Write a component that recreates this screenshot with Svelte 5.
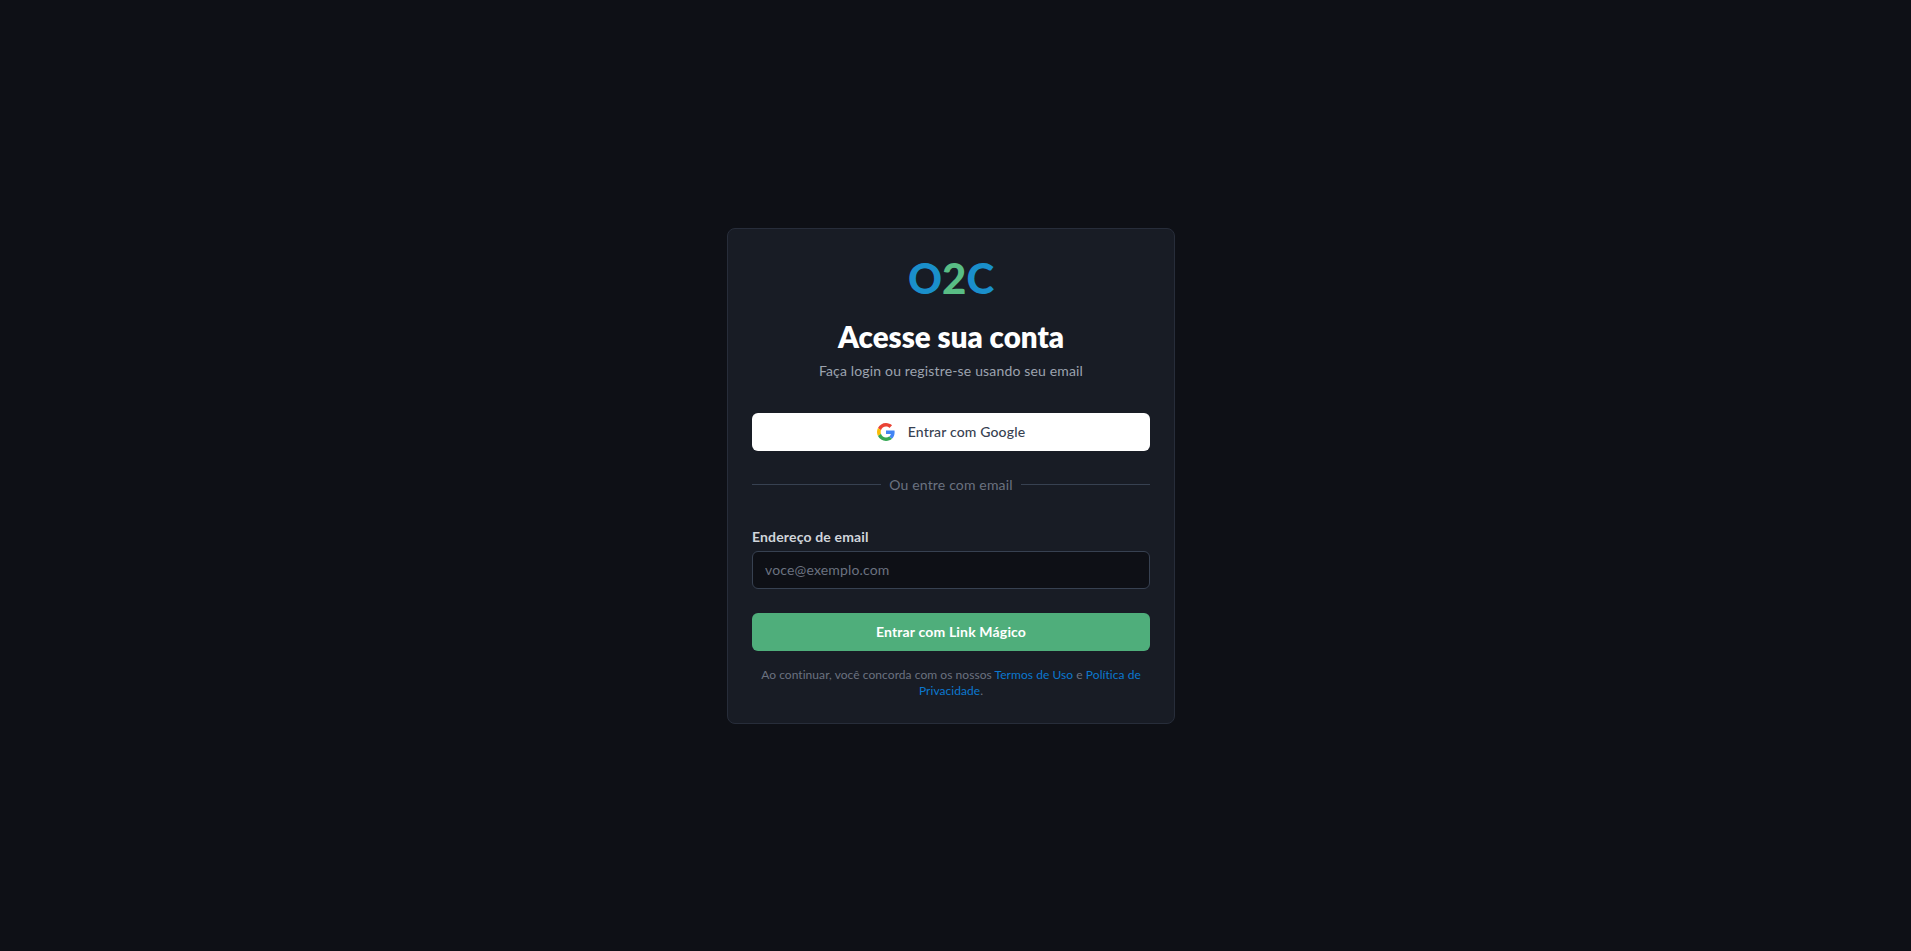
<script>
    let email = $state("");
</script>

<main class="page">
    <section class="card">
        <header class="head">
            <div class="logo" aria-label="O2C"><span class="blue">O</span><span class="green">2</span><span class="blue">C</span></div>
            <h1>Acesse sua conta</h1>
            <p>Faça login ou registre-se usando seu email</p>
        </header>

        <button class="google" type="button">
            <svg width="18" height="18" viewBox="0 0 48 48" aria-hidden="true">
                <path fill="#EA4335" d="M24 9.5c3.54 0 6.71 1.22 9.21 3.6l6.85-6.85C35.9 2.38 30.47 0 24 0 14.62 0 6.51 5.38 2.56 13.22l7.98 6.19C12.43 13.72 17.74 9.5 24 9.5z"/>
                <path fill="#4285F4" d="M46.98 24.55c0-1.57-.15-3.09-.38-4.55H24v9.02h12.94c-.58 2.96-2.26 5.48-4.78 7.18l7.73 6c4.51-4.18 7.09-10.36 7.09-17.65z"/>
                <path fill="#FBBC05" d="M10.53 28.59c-.48-1.45-.76-2.99-.76-4.59s.27-3.14.76-4.59l-7.98-6.19C.92 16.46 0 20.12 0 24c0 3.88.92 7.54 2.56 10.78l7.97-6.19z"/>
                <path fill="#34A853" d="M24 48c6.48 0 11.93-2.13 15.89-5.81l-7.73-6c-2.15 1.45-4.92 2.3-8.16 2.3-6.26 0-11.57-4.22-13.47-9.91l-7.98 6.19C6.51 42.62 14.62 48 24 48z"/>
            </svg>
            <span>Entrar com Google</span>
        </button>

        <div class="divider"><span>Ou entre com email</span></div>

        <form class="form" onsubmit={(e) => e.preventDefault()}>
            <label for="email">Endereço de email</label>
            <input id="email" type="email" placeholder="voce@exemplo.com" bind:value={email} />
            <button class="submit" type="submit">Entrar com Link Mágico</button>
        </form>

        <p class="terms">
            Ao continuar, você concorda com os nossos <a href="#termos">Termos de Uso</a> e <a href="#privacidade">Política de Privacidade</a>.
        </p>
    </section>
</main>

<style>
    :global(body) {
        margin: 0;
        background: #0e1016;
    }
    .page {
        box-sizing: border-box;
        min-height: 951px;
        width: 1902px;
        display: flex;
        align-items: center;
        justify-content: center;
        font-family: Lato, "Open Sans", sans-serif;
        letter-spacing: 0.01em;
    }
    .card {
        box-sizing: border-box;
        width: 448px;
        padding: 24px;
        background: #181c25;
        border: 1px solid #272d3a;
        border-radius: 8px;
    }
    .head {
        text-align: center;
        margin-bottom: 32px;
    }
    .logo {
        font-weight: 900;
        font-size: 42px;
        line-height: 50px;
        height: 50px;
        margin-bottom: 16px;
        letter-spacing: 0;
    }
    .blue { color: #1a8fcb; }
    .green { color: #59bd85; }
    h1 {
        margin: 0 0 6px;
        font-size: 29.5px;
        line-height: 36px;
        font-weight: 800;
        letter-spacing: 0;
        color: #fff;
    }
    .head p {
        margin: 0;
        font-size: 14px;
        line-height: 20px;
        color: #9ca3af;
    }
    button {
        display: flex;
        align-items: center;
        justify-content: center;
        width: 100%;
        height: 38px;
        border: 0;
        border-radius: 6px;
        font-family: inherit;
        font-size: 14px;
        letter-spacing: inherit;
        cursor: pointer;
    }
    .google {
        gap: 13px;
        background: #fff;
        color: #374151;
        font-weight: 500;
    }
    .divider {
        display: flex;
        align-items: center;
        gap: 8px;
        margin: 24px 0 32px;
        font-size: 14px;
        line-height: 20px;
        color: #6b7280;
    }
    .divider::before,
    .divider::after {
        content: "";
        flex: 1;
        height: 1px;
        background: #374151;
    }
    .form {
        display: flex;
        flex-direction: column;
    }
    label {
        margin-bottom: 4px;
        font-size: 14px;
        line-height: 20px;
        font-weight: 700;
        color: #d1d5db;
    }
    input {
        box-sizing: border-box;
        width: 100%;
        height: 38px;
        padding: 0 12px;
        background: #0e1016;
        border: 1px solid #374151;
        border-radius: 6px;
        font-family: inherit;
        font-size: 14px;
        letter-spacing: inherit;
        color: #fff;
        outline: none;
    }
    input::placeholder { color: #6b7280; }
    .submit {
        margin-top: 24px;
        background: #4fae7b;
        color: #fff;
        font-weight: 700;
    }
    .terms {
        margin: 16px 0 0;
        text-align: center;
        font-size: 12px;
        line-height: 16px;
        letter-spacing: 0.0045em;
        color: #6b7280;
    }
    .terms a {
        color: #0b78cf;
        text-decoration: none;
    }
</style>
